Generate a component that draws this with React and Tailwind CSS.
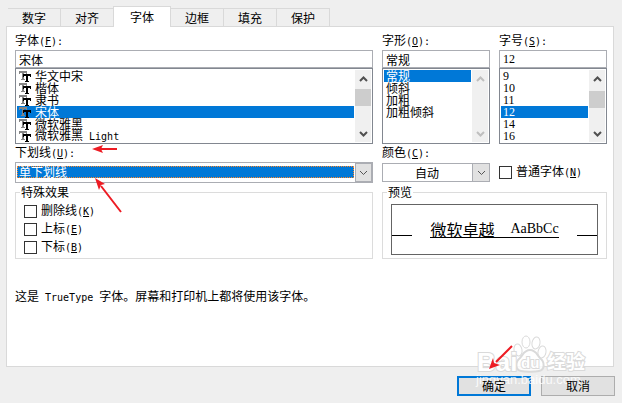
import { useState } from "react";

const FONTS = [
  { name: "华文中宋" },
  { name: "楷体" },
  { name: "隶书" },
  { name: "宋体" },
  { name: "微软雅黑" },
  { name: "微软雅黑", latin: "Light" },
];
const STYLES = [{ name: "常规" }, { name: "倾斜" }, { name: "加粗" }, { name: "加粗倾斜" }];
const SIZES = ["9", "10", "11", "12", "14", "16"].map((name) => ({ name }));

function Latin({ children }) {
  return <span className="font-['DejaVu_Sans_Mono',monospace] text-[10px]">{children}</span>;
}

function Caption({ text, hotkey, colon }) {
  return (
    <>
      {text}
      <Latin>
        (<u>{hotkey}</u>){colon ? ":" : ""}
      </Latin>
    </>
  );
}

function Chevron({ up, className }) {
  return (
    <svg viewBox="0 0 9 6" className={className} fill="none" stroke="currentColor" aria-hidden="true">
      <path d={up ? "M1 5 4.5 1.5 8 5" : "M1 1 4.5 4.5 8 1"} />
    </svg>
  );
}

function TrueTypeIcon() {
  return (
    <svg viewBox="0 0 12 12" className="size-3 shrink-0" shapeRendering="crispEdges" aria-hidden="true">
      <path fill="#848484" d="M0 1h8v3H7V3H5v6h1v1H2V9h1V3H1v1H0z" />
      <path fill="#000" d="M4 4h8v3h-1V6H9v5h1v1H6v-1h1V6H5v1H4z" />
    </svg>
  );
}

function ScrollBar({ disabled, thumb }) {
  return (
    <div className={`flex w-4 flex-col items-center bg-[#f0f0f0] ${disabled ? "text-[#bfbfbf]" : "text-[#505050]"}`}>
      <Chevron up className="my-1.5 h-1.5 w-[9px] shrink-0 stroke-2" />
      {thumb && <div className={`h-[17px] w-full bg-[#cdcdcd] ${thumb}`} />}
      <Chevron className="mt-auto mb-[5px] h-1.5 w-[9px] shrink-0 stroke-2" />
    </div>
  );
}

function Picker({ id, text, hotkey, items, initial, icons, disabled, thumb, face = "" }) {
  const [selected, setSelected] = useState(initial);
  return (
    <div className="min-w-0">
      <label htmlFor={id} className="mb-0.5 flex h-3.5 items-center">
        <span><Caption text={text} hotkey={hotkey} colon /></span>
      </label>
      <input
        id={id}
        value={items[selected].name}
        readOnly
        className={`block h-[18px] w-full border border-[#abadb3] bg-white px-[3px] leading-4 outline-none ${face}`}
      />
      <div className="flex h-[76px] border border-[#828790] bg-white p-px">
        <ul role="listbox" aria-label={text} className="mr-px min-w-0 flex-1">
          {items.map((item, i) => (
            <li
              key={i}
              role="option"
              aria-selected={i === selected}
              onClick={() => setSelected(i)}
              className={`flex h-3 items-center gap-1 whitespace-pre px-0.5 leading-3 ${face} ${
                i === selected ? "bg-[#0078d7] text-white" : ""
              }`}
            >
              {icons && <TrueTypeIcon />}
              <span>
                {item.name}
                {item.latin && <Latin> {item.latin}</Latin>}
              </span>
            </li>
          ))}
        </ul>
        <ScrollBar disabled={disabled} thumb={thumb} />
      </div>
    </div>
  );
}

function Check({ text, hotkey }) {
  return (
    <label className="flex h-[18px] items-center gap-1">
      <input
        type="checkbox"
        className="size-[13px] shrink-0 appearance-none border border-[#333] bg-white checked:bg-[#0078d7]"
      />
      <span><Caption text={text} hotkey={hotkey} /></span>
    </label>
  );
}

function Tabs() {
  const tabs = ["数字", "对齐", "字体", "边框", "填充", "保护"];
  return (
    <div role="tablist" className="flex h-5 items-end pl-0.5">
      {tabs.map((t) =>
        t === "字体" ? (
          <button
            key={t}
            role="tab"
            aria-selected="true"
            className="relative -mb-px h-[21px] w-[58px] border border-b-0 border-[#d9d9d9] bg-white"
          >
            {t}
          </button>
        ) : (
          <button
            key={t}
            role="tab"
            aria-selected="false"
            className={`h-[18px] border-t border-[#d9d9d9] ${t === "对齐" ? "w-[52px]" : "w-[53px] border-r"}`}
          >
            {t}
          </button>
        )
      )}
    </div>
  );
}

function Arrows() {
  return (
    <svg width="622" height="403" className="pointer-events-none absolute top-0 left-0" fill="#ed1c24" stroke="#ed1c24" aria-hidden="true">
      <path d="M117 149H100M121 212 101 186M512 346 496 362" strokeWidth="2" />
      <path stroke="none" d="M92 149l11-4-2 4 2 4zM95 178l10 6-4 1-2 5zM489 369l4-11 1 5 6 2z" />
    </svg>
  );
}

function Watermark() {
  return (
    <svg
      viewBox="0 0 120 65"
      className="pointer-events-none absolute right-8 bottom-2 h-[65px] w-[120px]"
      aria-hidden="true"
    >
      <g fill="#fff" fillOpacity="0.8" stroke="#dadada" strokeWidth="1">
        <ellipse cx="56" cy="12" rx="4" ry="6" />
        <ellipse cx="66" cy="13" rx="4" ry="6" transform="rotate(10 66 13)" />
        <ellipse cx="48" cy="20" rx="4" ry="6" transform="rotate(-10 48 20)" />
        <ellipse cx="72" cy="22" rx="4" ry="6" transform="rotate(10 72 22)" />
        <path d="M60 20c6 0 7 5 10 8 5 4 5 12-1 13-4 1-14 1-18 0-6-1-6-9-1-13 3-3 4-8 10-8z" strokeWidth="2" />
        <g strokeWidth="2" paintOrder="stroke" fillOpacity="1">
          <text x="7" y="41" className="font-['Liberation_Sans',sans-serif] text-[26px] font-bold">Bai</text>
          <text x="51" y="38" className="font-['Liberation_Sans',sans-serif] text-[15px] font-bold">du</text>
          <text x="77" y="39" className="font-['Noto_Sans_CJK_SC',sans-serif] text-[19px] font-bold">经验</text>
        </g>
      </g>
      <text x="6" y="54" fill="#fff" fillOpacity="0.85" className="font-['Liberation_Sans',sans-serif] text-[13px]">
        jingyan.baidu.com
      </text>
    </svg>
  );
}

export default function App() {
  return (
    <main className="relative min-h-screen bg-[#efefef] pt-1.5 pr-[7px] pb-[7px] pl-1.5 font-['Noto_Sans_CJK_SC',sans-serif] text-xs leading-4 text-black">
      <Tabs />
      <section role="tabpanel" className="mr-px min-h-[341px] border border-[#d9d9d9] bg-white pt-[7px] pr-1.5 pl-2">
        <div className="grid grid-cols-[minmax(0,1fr)_108px_108px] gap-x-[9px]">
          <Picker id="font" text="字体" hotkey="F" items={FONTS} initial={3} icons thumb="mt-px" />
          <Picker id="style" text="字形" hotkey="O" items={STYLES} initial={0} disabled />
          <Picker
            id="size"
            text="字号"
            hotkey="S"
            items={SIZES}
            initial={3}
            thumb="mt-[3px]"
            face="font-['Liberation_Serif',serif]"
          />

          <div className="min-w-0 pt-px">
            <label htmlFor="underline" className="flex h-4 items-center">
              <span><Caption text="下划线" hotkey="U" colon /></span>
            </label>
            <div className="mt-px flex h-[21px] border border-[#abadb3] bg-white">
              <div className="mx-px grid min-w-0 flex-1">
                <span className="col-start-1 row-start-1 mt-[3px] h-3 border border-dotted border-[#ff8728] bg-[#0078d7]" />
                <select
                  id="underline"
                  className="col-start-1 row-start-1 h-[19px] w-full appearance-none bg-transparent pb-0.5 pl-0.5 leading-4 text-white outline-none"
                >
                  <option>单下划线</option>
                </select>
              </div>
              <span className="pointer-events-none flex w-[17px] items-center justify-center border border-[#abadb3] bg-[#e1e1e1] text-[#555]">
                <Chevron className="h-1.5 w-[9px]" />
              </span>
            </div>
          </div>
          <div className="pt-px">
            <label htmlFor="color" className="flex h-4 items-center">
              <span><Caption text="颜色" hotkey="C" colon /></span>
            </label>
            <div className="mt-0.5 flex h-[19px] border border-[#abadb3] bg-white">
              <select id="color" className="min-w-0 flex-1 appearance-none bg-white pl-8 leading-4 outline-none">
                <option>自动</option>
              </select>
              <span className="pointer-events-none flex w-[17px] items-center justify-center border-l border-[#abadb3] bg-[#e1e1e1] text-[#555]">
                <Chevron className="h-1.5 w-[9px]" />
              </span>
            </div>
          </div>
          <div className="flex items-end pb-0.5">
            <Check text="普通字体" hotkey="N" />
          </div>
        </div>

        <div className="mt-[3px] grid grid-cols-[minmax(0,1fr)_225px] gap-x-[9px]">
          <fieldset className="h-[73px] min-w-0 border border-[#dcdcdc] px-2">
            <legend className="-ml-1 px-px leading-3">特殊效果</legend>
            <div className="pt-1">
              <Check text="删除线" hotkey="K" />
              <Check text="上标" hotkey="E" />
              <Check text="下标" hotkey="B" />
            </div>
          </fieldset>
          <fieldset className="h-[73px] min-w-0 border border-[#dcdcdc] px-2">
            <legend className="-ml-1 px-px leading-3">预览</legend>
            <div className="mt-1.5 flex h-[51px] items-center justify-between border border-[#646464]">
              <span className="mt-3 h-px w-5 bg-black" />
              <span className="flex border-b border-black text-base leading-4">
                <span>微软卓越</span>
                <span className="pl-4 font-['Liberation_Serif',serif] text-sm leading-4">AaBbCc</span>
              </span>
              <span className="mt-3 h-px w-5 bg-black" />
            </div>
          </fieldset>
        </div>

        <p className="mt-[29px]">
          这是<Latin> TrueType </Latin>字体。屏幕和打印机上都将使用该字体。
        </p>
      </section>

      <footer className="mt-[9px] flex justify-end gap-2.5">
        <button className="h-5 w-[74px] border-2 border-[#0078d7] bg-[#e1e1e1] leading-4">
          <span className="relative z-10">确定</span>
        </button>
        <button className="h-5 w-[74px] border border-[#adadad] bg-[#e1e1e1] leading-4">
          <span className="relative z-10">取消</span>
        </button>
      </footer>
      <Watermark />
      <Arrows />
    </main>
  );
}
